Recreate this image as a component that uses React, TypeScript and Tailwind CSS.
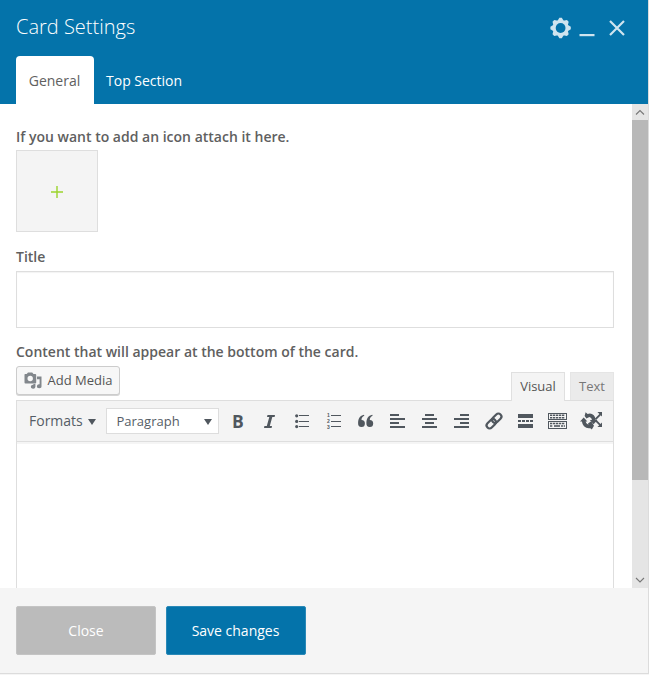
import React from "react";

const INK = "#50575e";

function Gear() {
  return (
    <svg width="22" height="22" viewBox="-10.6 -11 22 22">
      <g fill="#cfe4ef">
        {[0, 45, 90, 135].map((a) => (
          <path key={a} transform={`rotate(${a})`} d="M-3.2 -7 L-1.2 -10.2 H1.2 L3.2 -7 V7 L1.2 10.2 H-1.2 L-3.2 7Z" />
        ))}
        <circle r="7.8" />
      </g>
      <circle r="4.9" fill="#0473aa" />
    </svg>
  );
}

function MediaIcon() {
  return (
    <svg width="18" height="18" viewBox="0 0 18 18" fill="#82878c">
      <path
        fillRule="evenodd"
        d="M1 2 H2.7 L4 .5 H8.2 L9.5 2 H11.2 Q12.2 2 12.2 3 V10.5 Q12.2 11.5 11.2 11.5 H1.5 Q.5 11.5 .5 10.5 V3 Q.5 2 1 2Z M6.2 3.8 A2.7 2.7 0 1 0 6.2 9.2 A2.7 2.7 0 1 0 6.2 3.8Z"
      />
      <path d="M13 4.5 H17.5 V14 A2.3 2 0 1 1 15.6 12.2 V7.3 H13Z" />
      <path d="M11.4 12 V15 A2.3 2 0 1 1 9.4 12.8 V12Z" />
    </svg>
  );
}

function Tool({ children }: { children: React.ReactNode }) {
  return (
    <button className="flex h-8 w-8 shrink-0 items-center justify-center">
      <svg width="24" height="20" viewBox="-12 -10 24 20" fill={INK}>
        {children}
      </svg>
    </button>
  );
}

function Align({ shift }: { shift: number }) {
  return (
    <Tool>
      <path d="M-8 -3h15v2h-15z M-8 5h15v2h-15z" />
      <path transform={`translate(${shift} 0)`} d="M-8 -7h9v2h-9z M-8 1h9v2h-9z" />
    </Tool>
  );
}

function Toolbar() {
  return (
    <div className="flex h-[42px] shrink-0 items-center border border-[#dedede] bg-[#f4f4f4] pl-3 text-[#555d66]">
      <button className="flex h-[26px] w-[77px] shrink-0 items-center pb-[2px] text-[14px]">
        Formats
        <svg className="mt-[3px] ml-[5px]" width="8" height="6" viewBox="0 0 8 6" fill={INK}>
          <path d="M0 0H8L4 6Z" />
        </svg>
      </button>
      <button className="mr-[3px] flex h-[26px] w-[113px] shrink-0 items-center justify-between border border-[#dddddd] bg-white pt-[1px] pr-[6px] pl-[9.5px] text-[13px]">
        Paragraph
        <svg width="8" height="6" viewBox="0 0 8 6" fill={INK}>
          <path d="M0 0H8L4 6Z" />
        </svg>
      </button>
      <button className="flex h-8 w-8 shrink-0 items-center justify-center text-[17.5px] leading-[32px] font-bold text-[#50575e]">
        B
      </button>
      <Tool>
        <path d="M-2.5 -6 H5 L4.6 -4 H2.3 L-.2 5 H2 L1.6 7 H-6 L-5.6 5 H-3.2 L-.7 -4 H-3Z" />
      </Tool>
      <Tool>
        <path d="M-3 -6h10v1h-10z M-3 0h10v1h-10z M-3 5h10v1h-10z" />
        <circle cx="-5.3" cy="-5.2" r="1.6" />
        <circle cx="-5.3" cy=".4" r="1.6" />
        <circle cx="-5.3" cy="5.6" r="1.6" />
      </Tool>
      <Tool>
        <path d="M-3 -6h10v1h-10z M-3 0h10v1h-10z M-3 5h10v1h-10z" />
        <g className="font-['Liberation_Sans',sans-serif] font-bold" fontSize="5">
          <text x="-7" y="-4">1</text>
          <text x="-7" y="2">2</text>
          <text x="-7" y="8">3</text>
        </g>
      </Tool>
      <Tool>
        {[-8, 0.3].map((x) => (
          <path
            key={x}
            transform={`translate(${x} 0)`}
            d="M6.3 -5.3 C4.3 -4.4 3.6 -3 3.5 -1.1 A3.4 3.6 0 1 1 .1 2.3 C0 -2.5 2 -5.5 6 -6.3Z"
          />
        ))}
      </Tool>
      <Align shift={0} />
      <Align shift={3} />
      <Align shift={6} />
      <Tool>
        <g transform="rotate(-45)" fill="none" stroke={INK} strokeWidth="2.2">
          <rect x="-9.2" y="-3" width="10.7" height="6" rx="3" />
          <rect x="-1.5" y="-3" width="10.7" height="6" rx="3" />
        </g>
      </Tool>
      <Tool>
        <path d="M-8 -7h15v4h-15z M-8 3h15v4h-15z M-8 -1h3v2h-3z M-4 -1h3v2h-3z M0 -1h3v2h-3z M4 -1h3v2h-3z" />
      </Tool>
      <Tool>
        <path d="M-10 -8h19v7h-19z M-10 0h19v8h-19z" />
        <path d="M-9 -7h17v5h-17z M-9 1h17v6h-17z" fill="#f4f4f4" />
        <g fill="none" stroke={INK} strokeWidth="1.6" strokeDasharray="2.3 .7">
          <path d="M-8 -5.7h15 M-8 -3.3h15 M-8 2.5h15" />
          <path d="M-8 5h3 M3 5h4" />
          <path d="M-4 5h6" strokeDasharray="none" />
        </g>
      </Tool>
      <button className="ml-[2px] flex h-8 w-8 shrink-0 items-center justify-center">
        <svg width="24" height="20" viewBox="-12 -10 24 20" fill={INK}>
          <path d="M-12 .6 L-8.3 -3.6 L-4.6 .6 H-6.4 Q-5.4 3.8 -1.8 4 L-.4 6.8 Q-4.8 8.4 -8 5.2 Q-9.9 2.9 -10.1 .6Z" />
          <path d="M-7.4 -5 L-6.4 -8.8 L-4.4 -7 Q-1 -8.4 1.8 -5.8 Q3.5 -4 3.6 -1 H5.4 L1.6 3.2 L-2.2 -1 H0 Q-.4 -3.6 -2.6 -4 L-5.6 -2.6Z" />
          <path d="M-4 2.4 L-.8 .2 L2 4.8 L-.2 8.4 L-2.4 6.6Z" />
          <path d="M3.4 -1.6 L8.6 -6.8 M3.4 -.8 L8.6 4.4" stroke={INK} strokeWidth="1.9" />
          <path d="M5.4 -9H10V-4.4Z M5.4 6H10V1.4Z" />
        </svg>
      </button>
    </div>
  );
}

export default function App() {
  return (
    <div className="h-[675px] w-[649px] overflow-hidden bg-[#f5f5f5] font-['Open_Sans',sans-serif] text-[14px] text-[#606060]">
      <div className="flex h-[674px] w-[649px] flex-col border-r border-b border-[#dcdcdc] bg-white">
        <header className="flex h-[104px] shrink-0 flex-col justify-between bg-[#0473aa] pl-4 text-white">
          <div className="flex h-14 items-center justify-between pr-[22px]">
            <h1 className="-mt-[2px] text-[20px] font-light">Card Settings</h1>
            <div className="flex items-center">
              <Gear />
              <svg className="ml-[7px]" width="16" height="18" viewBox="0 0 16 18">
                <path d="M.5 15h15v2.2h-15z" fill="#cfe4ef" />
              </svg>
              <svg className="ml-[13px]" width="18" height="18" viewBox="0 0 18 18">
                <path d="M2 2 L16 16 M16 2 L2 16" stroke="#cfe4ef" strokeWidth="2.2" />
              </svg>
            </div>
          </div>
          <nav className="flex h-12">
            <button className="w-[78px] rounded-t-[4px] bg-white pr-[1px] text-[#606060]">General</button>
            <button className="px-[12px]">Top Section</button>
          </nav>
        </header>

        <div className="flex h-[484px] shrink-0">
          <main className="flex flex-1 flex-col overflow-hidden pt-[23px] pr-[18px] pl-4">
            <label className="h-[23px] text-[14px] leading-[20px] font-semibold">
              If you want to add an icon attach it here.
            </label>
            <button className="flex h-[82px] w-[82px] shrink-0 items-center justify-center border border-[#dedede] bg-[#f4f4f4] pt-[1px]">
              <svg width="12" height="12" viewBox="0 0 12 12">
                <path d="M0 6h12M6 0v12" stroke="#9bd32c" strokeWidth="1.4" />
              </svg>
            </button>
            <label className="mt-[15px] h-6 shrink-0 leading-[20px] font-semibold">Title</label>
            <div className="h-[57px] shrink-0 border border-[#dedede] bg-white shadow-[inset_0_1px_1px_rgba(0,0,0,0.05)]" />
            <label className="mt-[14px] h-6 shrink-0 leading-[20px] font-semibold">
              Content that will appear at the bottom of the card.
            </label>
            <div className="flex h-[34px] shrink-0 items-start justify-between">
              <button className="flex h-[29px] w-[104px] items-center rounded-[3px] border border-[#cccccc] bg-[#f7f7f7] pl-[7px] text-[13px] text-[#555555] shadow-[0_1px_0_#d5d5d5]">
                <MediaIcon />
                <span className="ml-[5.5px]">Add Media</span>
              </button>
              <div className="mt-[6px] flex gap-[5px] text-[13px]">
                <div className="relative z-10 h-[29px] w-[54px] border border-b-0 border-[#e0e0e0] bg-[#f4f4f4] text-center leading-[26px] text-[#555555]">
                  Visual
                </div>
                <div className="h-7 w-[44px] border border-b-0 border-[#e5e5e5] bg-[#ebebeb] text-center leading-[26px] text-[#777777]">
                  Text
                </div>
              </div>
            </div>
            <Toolbar />
            <div className="flex-1 border-x border-[#dedede] bg-white shadow-[inset_0_2px_0_#f5f5f5]" />
          </main>
          <aside className="flex w-4 flex-col bg-[#e5e5e5]">
            <svg width="16" height="16" viewBox="0 0 16 16">
              <path d="M4 10.5 L8 6.5 L12 10.5" fill="none" stroke="#777777" strokeWidth="1.1" />
            </svg>
            <div className="flex-1">
              <div className="h-[360px] bg-[#b8b8b8]" />
            </div>
            <svg width="16" height="16" viewBox="0 0 16 16">
              <path d="M4 6 L8 10 L12 6" fill="none" stroke="#777777" strokeWidth="1.1" />
            </svg>
          </aside>
        </div>

        <footer className="flex flex-1 gap-[10px] bg-[#f5f5f5] pt-[18px] pl-4 text-white">
          <button className="h-[49px] w-[140px] rounded-[2px] border border-[#c4c4c4] bg-[#bbbbbb]">Close</button>
          <button className="h-[49px] w-[140px] rounded-[2px] border border-[#2a89b7] bg-[#0473aa] pr-[1px]">Save changes</button>
        </footer>
      </div>
    </div>
  );
}
